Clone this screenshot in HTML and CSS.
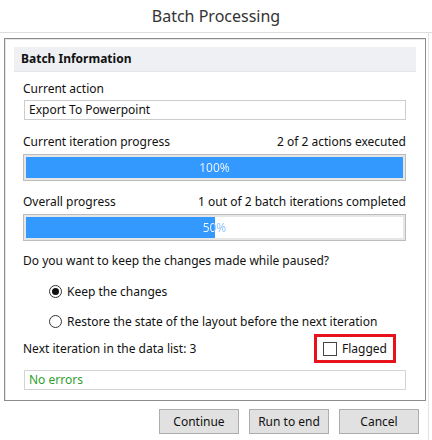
FILE: index.html
```html
<!DOCTYPE html>
<html>
<head>
<meta charset="utf-8">
<link rel="stylesheet" href="styles.css">
</head>
<body>
<div class="window">
  <div class="titlebar">Batch Processing</div>
  <div class="dialog">
    <div class="group">
      <div class="group-header">Batch Information</div>
      <div class="group-content">
        <div class="row label-row l1"><span>Current action</span></div>
        <div class="textbox">Export To Powerpoint</div>
        <div class="row label-row l2"><span>Current iteration progress</span><span>2 of 2 actions executed</span></div>
        <div class="progress">
          <div class="track">
            <div class="fill" style="width:100%"></div>
            <div class="pct" style="--p:100%">100%</div>
          </div>
        </div>
        <div class="row label-row l3"><span>Overall progress</span><span>1 out of 2 batch iterations completed</span></div>
        <div class="progress">
          <div class="track">
            <div class="fill" style="width:50%"></div>
            <div class="pct" style="--p:50%">50%</div>
          </div>
        </div>
        <div class="row label-row l4"><span>Do you want to keep the changes made while paused?</span></div>
        <div class="radio-row r1"><span class="radio checked"></span><span>Keep the changes</span></div>
        <div class="radio-row r2"><span class="radio"></span><span>Restore the state of the layout before the next iteration</span></div>
        <div class="next-row">
          <span>Next iteration in the data list: 3</span>
          <div class="flag-box"><span class="checkbox"></span><span>Flagged</span></div>
        </div>
        <div class="textbox status">No errors</div>
      </div>
    </div>
    <div class="buttons">
      <button class="btn">Continue</button>
      <button class="btn">Run to end</button>
      <button class="btn">Cancel</button>
    </div>
  </div>
</div>
</body>
</html>
```
FILE: styles.css
```css
html, body {
  margin: 0;
  padding: 0;
  background: #ffffff;
}
body {
  font-family: "Noto Sans", "Open Sans", sans-serif;
  font-size: 12px;
  color: #111111;
}
.window {
  width: 432px;
  height: 440px;
  overflow: hidden;
}
.titlebar {
  height: 32px;
  line-height: 33px;
  text-align: center;
  font-size: 16px;
  color: #333333;
  border-bottom: 1px solid #dddddd;
}
.dialog {
  width: 428px;
  height: 407px;
  border-right: 1px solid #e4e4e4;
  padding-top: 5px;
}
.group {
  box-sizing: border-box;
  width: 422px;
  height: 363px;
  margin-left: 4px;
  border: 1px solid #8c8c8c;
  box-shadow: inset 1px 1px 0 #e6e6e6;
  padding: 8px 9px 0 9px;
}
.group-header {
  height: 25px;
  line-height: 24px;
  background: #eef0f4;
  border-bottom: 1px solid #e2e5ea;
  box-sizing: border-box;
  padding-left: 7px;
  font-weight: bold;
  font-size: 12px;
  color: #111111;
}
.group-content {
  display: flex;
  flex-direction: column;
  margin: 0 10px 0 9px;
}
.row {
  display: flex;
  justify-content: space-between;
  height: 16px;
  line-height: 16px;
}
.l1 { margin-top: 9px; }
.l2 { margin-top: 14px; }
.l3 { margin-top: 13px; }
.l4 { margin-top: 12px; }
.textbox {
  box-sizing: border-box;
  height: 20px;
  margin-top: 3px;
  margin-left: 1px;
  border: 1px solid #cdcdcd;
  padding-left: 4px;
  line-height: 18px;
}
.status {
  margin-top: 7px;
  color: #2f9e2f;
  border-color: #d4d4d4;
}
.progress {
  box-sizing: border-box;
  height: 27px;
  margin-top: 4px;
  border: 1px solid #bcbcbc;
  background: #e6e6e6;
  padding: 2px;
}
.track {
  position: relative;
  height: 100%;
  background: #ffffff;
}
.fill {
  height: 100%;
  background: #3399ff;
}
.pct {
  position: absolute;
  left: 0;
  top: 0;
  width: 100%;
  height: 100%;
  text-align: center;
  line-height: 21px;
  font-size: 12px;
  color: transparent;
  background: linear-gradient(to right, #f2f7ff var(--p), #8cc2ff var(--p));
  -webkit-background-clip: text;
  background-clip: text;
}
.radio-row {
  display: flex;
  align-items: center;
  height: 16px;
  margin-left: 26px;
  gap: 5px;
}
.r1 { margin-top: 14px; }
.r2 { margin-top: 14px; }
.radio {
  box-sizing: border-box;
  width: 13px;
  height: 13px;
  border: 1px solid #333333;
  border-radius: 50%;
  display: flex;
  align-items: center;
  justify-content: center;
  background: #ffffff;
}
.radio.checked::after {
  content: "";
  width: 7px;
  height: 7px;
  border-radius: 50%;
  background: #111111;
}
.next-row {
  display: flex;
  align-items: center;
  justify-content: space-between;
  margin-top: 5px;
  height: 29px;
}
.flag-box {
  box-sizing: border-box;
  height: 29px;
  width: 82px;
  margin-right: 10px;
  border: 3px solid #e8121c;
  display: flex;
  align-items: center;
  padding-left: 6px;
  gap: 5px;
}
.checkbox {
  box-sizing: border-box;
  width: 14px;
  height: 14px;
  border: 1px solid #444444;
  background: #ffffff;
}
.buttons {
  display: flex;
  justify-content: flex-end;
  gap: 10px;
  margin-top: 8px;
  margin-right: 9px;
}
.btn {
  box-sizing: border-box;
  width: 80px;
  height: 25px;
  border: 1px solid #adadad;
  background: #e1e1e1;
  font-family: "Noto Sans", "Open Sans", sans-serif;
  font-size: 12px;
  color: #111111;
  padding: 0;
}
```
